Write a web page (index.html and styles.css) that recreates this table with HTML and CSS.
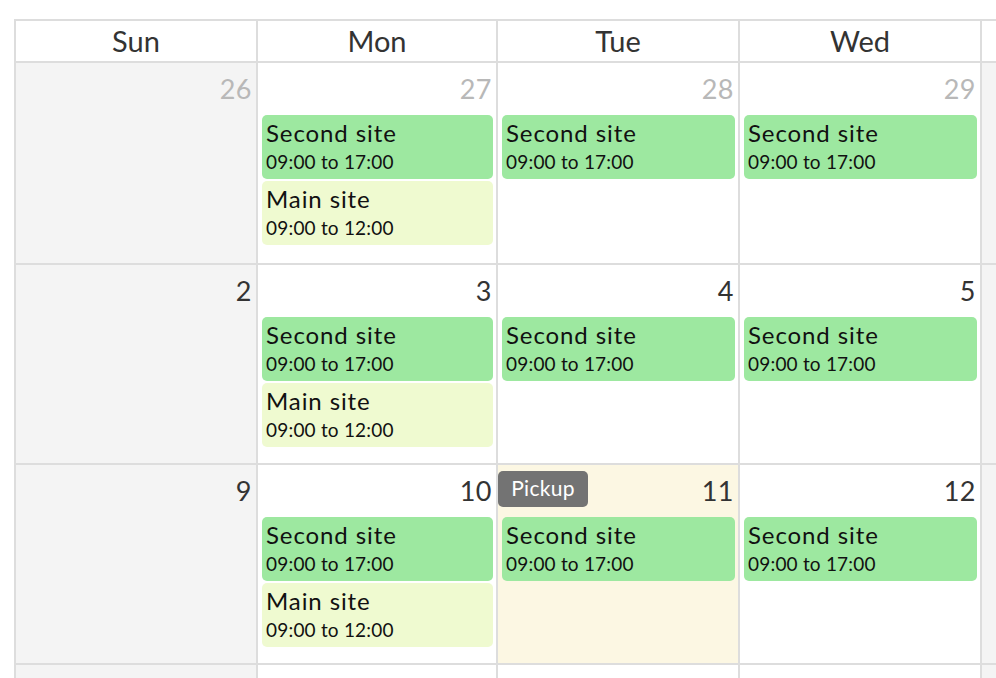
FILE: index.html
```html
<!DOCTYPE html>
<html>
<head>
<meta charset="utf-8">
<link rel="stylesheet" href="styles.css">
</head>
<body>
<div class="cal">
  <div class="row head">
    <div class="hcell">Sun</div>
    <div class="hcell">Mon</div>
    <div class="hcell">Tue</div>
    <div class="hcell">Wed</div>
    <div class="hcell stub"></div>
  </div>

  <div class="row week first">
    <div class="day off"><div class="top"><span class="num other">26</span></div></div>
    <div class="day"><div class="top"><span class="num other">27</span></div>
      <div class="ev second"><div class="title">Second site</div><div class="time">09:00 to 17:00</div></div>
      <div class="ev main"><div class="title">Main site</div><div class="time">09:00 to 12:00</div></div>
    </div>
    <div class="day"><div class="top"><span class="num other">28</span></div>
      <div class="ev second"><div class="title">Second site</div><div class="time">09:00 to 17:00</div></div>
    </div>
    <div class="day"><div class="top"><span class="num other">29</span></div>
      <div class="ev second"><div class="title">Second site</div><div class="time">09:00 to 17:00</div></div>
    </div>
    <div class="day off stub"></div>
  </div>

  <div class="row week">
    <div class="day off"><div class="top"><span class="num">2</span></div></div>
    <div class="day"><div class="top"><span class="num">3</span></div>
      <div class="ev second"><div class="title">Second site</div><div class="time">09:00 to 17:00</div></div>
      <div class="ev main"><div class="title">Main site</div><div class="time">09:00 to 12:00</div></div>
    </div>
    <div class="day"><div class="top"><span class="num">4</span></div>
      <div class="ev second"><div class="title">Second site</div><div class="time">09:00 to 17:00</div></div>
    </div>
    <div class="day"><div class="top"><span class="num">5</span></div>
      <div class="ev second"><div class="title">Second site</div><div class="time">09:00 to 17:00</div></div>
    </div>
    <div class="day off stub"></div>
  </div>

  <div class="row week">
    <div class="day off"><div class="top"><span class="num">9</span></div></div>
    <div class="day"><div class="top"><span class="num">10</span></div>
      <div class="ev second"><div class="title">Second site</div><div class="time">09:00 to 17:00</div></div>
      <div class="ev main"><div class="title">Main site</div><div class="time">09:00 to 12:00</div></div>
    </div>
    <div class="day today"><div class="top"><span class="badge">Pickup</span><span class="num">11</span></div>
      <div class="ev second"><div class="title">Second site</div><div class="time">09:00 to 17:00</div></div>
    </div>
    <div class="day"><div class="top"><span class="num">12</span></div>
      <div class="ev second"><div class="title">Second site</div><div class="time">09:00 to 17:00</div></div>
    </div>
    <div class="day off stub"></div>
  </div>

  <div class="row week last">
    <div class="day off"></div>
    <div class="day"></div>
    <div class="day"></div>
    <div class="day"></div>
    <div class="day off stub"></div>
  </div>
</div>
</body>
</html>
```

FILE: styles.css
```css
html, body {
  margin: 0;
  padding: 0;
  overflow: hidden;
  background: #fff;
  height: 678px;
}
body {
  font-family: Lato, "Noto Sans", sans-serif;
  color: #333;
}
.cal {
  margin: 19px 0 0 14px;
  width: 982px;
  border-left: 2px solid #dddddd;
  border-top: 2px solid #dddddd;
}
.row {
  display: grid;
  grid-template-columns: 242px 240px 242px 242px 14px;
}
.hcell, .day {
  box-sizing: border-box;
  border-right: 2px solid #dddddd;
  border-bottom: 2px solid #dddddd;
}
.stub { border-right: 0; }
.hcell {
  height: 42px;
  text-align: center;
  font-size: 29px;
  line-height: 40px;
  color: #333;
}
.week { height: 200px; }
.week.first { height: 202px; }
.week.last { height: 14px; }
.week.last .day { border-bottom: 0; }
.day {
  display: flex;
  flex-direction: column;
  background: #fff;
  min-width: 0;
}
.day.off { background: #f4f4f4; }
.day.today { background: #fcf7e3; }
.top {
  height: 52px;
  display: flex;
  justify-content: space-between;
  align-items: flex-start;
  flex-shrink: 0;
}
.num {
  margin-left: auto;
  padding: 11px 4px 0 0;
  font-size: 27px;
  line-height: 30px;
  color: #333;
  letter-spacing: 0.5px;
}
.num.other { color: #b8b8b8; }
.badge {
  margin-top: 6px;
  height: 36px;
  width: 90px;
  box-sizing: border-box;
  background: #737373;
  color: #fff;
  border-radius: 5px;
  font-size: 21px;
  line-height: 34px;
  text-align: center;
  letter-spacing: 0.3px;
}
.ev {
  height: 64px;
  margin: 0 3px 2px 4px;
  padding: 4px 4px 0 4px;
  box-sizing: border-box;
  border-radius: 5px;
  color: #111;
}
.ev.second { background: #9de8a0; }
.ev.main { background: #effad0; }
.title {
  font-size: 24px;
  line-height: 28px;
  letter-spacing: 0.9px;
}
.time {
  font-size: 19px;
  line-height: 30px;
  letter-spacing: 0.2px;
}
```
